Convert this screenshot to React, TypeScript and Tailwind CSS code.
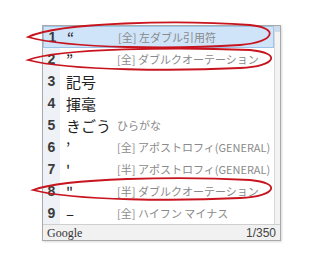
import React from "react";

type Row = { n: number; cand: string; note: string; big?: boolean };

const rows: Row[] = [
  { n: 1, cand: "“", note: "[全] 左ダブル引用符" },
  { n: 2, cand: "”", note: "[全] ダブルクオーテーション" },
  { n: 3, cand: "記号", note: "", big: true },
  { n: 4, cand: "揮毫", note: "", big: true },
  { n: 5, cand: "きごう", note: "ひらがな", big: true },
  { n: 6, cand: "’", note: "[全] アポストロフィ(GENERAL)" },
  { n: 7, cand: "'", note: "[半] アポストロフィ(GENERAL)" },
  { n: 8, cand: "\"", note: "[半] ダブルクオーテーション" },
  { n: 9, cand: "–", note: "[全] ハイフン マイナス" },
];

const jp = "font-['Noto_Sans_CJK_JP','Noto_Sans',sans-serif]";

export default function App() {
  return (
    <div className="relative h-[263px] w-[320px] overflow-hidden bg-white pl-[42px] pt-[25px]">
      {/* candidate window */}
      <div className="w-[239px] border border-[#a9a9a9] bg-white shadow-[1px_1px_2px_rgba(0,0,0,0.15)]">
        <div className="flex">
          <div className="flex-1">
            {rows.map((r) => (
              <div
                key={r.n}
                className={
                  "flex h-[22px] items-center " +
                  (r.n === 1 ? "border border-[#9cc3e8] bg-[#cfe4f8]" : "")
                }
              >
                <div
                  className={
                    "flex h-full w-[17px] items-center justify-center font-['Liberation_Sans',sans-serif] text-[14px] font-bold text-[#3a3a3a] " +
                    (r.n === 1 ? "" : "bg-[#eef1f6]")
                  }
                >
                  {r.n}
                </div>
                <div
                  className={`${jp} w-[57px] pl-[6px] text-[15px] leading-none text-[#222]`}
                >
                  {r.cand}
                </div>
                <div className={`${jp} whitespace-nowrap text-[11px] leading-none text-[#8a8a8a]`}>
                  {r.note}
                </div>
              </div>
            ))}
          </div>
          {/* scrollbar */}
          <div className="w-[6px] border-l border-[#d8d8d8] bg-[#f3f3f3]">
            <div className="h-[6px] bg-[#c9dcf0]" />
          </div>
        </div>
        {/* footer */}
        <div className="flex h-[16px] items-center justify-between border-t border-[#cfcfcf] bg-[#f1f1f1] px-[4px]">
          <span className="font-['Liberation_Serif',serif] text-[12px] leading-none text-[#333]">
            Google
          </span>
          <span className="font-['Liberation_Sans',sans-serif] text-[12px] leading-none text-[#444]">
            1/350
          </span>
        </div>
      </div>

      {/* red annotation ellipses */}
      <svg
        className="pointer-events-none absolute left-0 top-0"
        width="320"
        height="263"
        viewBox="0 0 320 263"
      >
        <g fill="none" stroke="#c8141e" strokeWidth="1.8">
          <path d="M28 37 C60 22 180 20 250 25 C280 28 275 42 240 45 C180 49 70 49 28 37 Z" />
          <path d="M28 60 C60 48 180 47 250 50 C282 53 277 66 240 68 C180 71 70 71 28 60 Z" />
          <path d="M33 190 C65 178 180 176 250 180 C282 183 277 196 240 198 C180 201 75 201 33 190 Z" />
        </g>
      </svg>
    </div>
  );
}
